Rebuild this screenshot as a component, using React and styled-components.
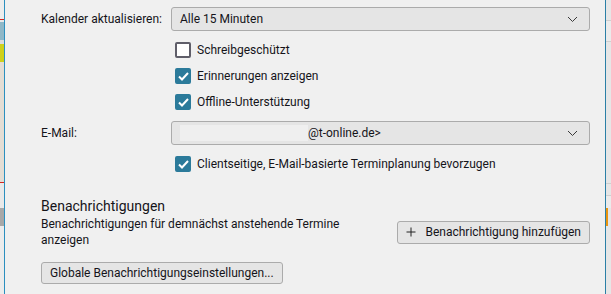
import React from "react";
import styled, { createGlobalStyle } from "styled-components";

const Global = createGlobalStyle`
  html, body { margin: 0; padding: 0; background: #f0f0f0; }
  body { font-family: Roboto, "Noto Sans", sans-serif; font-size: 12px; color: #15141a; }
`;

const Frame = styled.div`
  display: flex;
  width: 611px;
  height: 294px;
  overflow: hidden;
`;

const LeftEdge = styled.div`
  width: 4px;
  display: flex;
  flex-direction: column;
  background: #e4ddd4;
  border-right: 1px solid #2b8fbf;
`;

const Chip = styled.div`
  height: ${(p) => p.h}px;
  width: ${(p) => (p.w ? `${p.w}px` : "auto")};
  background: ${(p) => p.c};
  flex-shrink: 0;
`;

const RightEdge = styled.div`
  width: 5px;
  display: flex;
  flex-direction: column;
  background: #e6e6e6;
  border-left: 1px solid #2b7fa6;
`;

const Content = styled.div`
  flex: 1;
  padding: 7px 15px 0 36px;
  display: flex;
  flex-direction: column;
`;

const Grid = styled.div`
  display: grid;
  grid-template-columns: 130px 1fr;
  align-items: center;
`;

const Spacer = styled.div`
  grid-column: 1 / 3;
  height: ${(p) => p.h}px;
`;

const Label = styled.div`
  line-height: 24px;
`;

const Select = styled.div`
  height: 24px;
  box-sizing: border-box;
  border: 1px solid #ababab;
  border-radius: 3px;
  background: #e5e5e5;
  display: flex;
  align-items: center;
  padding: 0 11px 0 8px;
`;

const SelectText = styled.span`
  flex: 1;
  display: flex;
  align-items: center;
`;

const Redacted = styled.span`
  display: inline-block;
  width: 128px;
  height: 16px;
  background: #efefef;
`;

const CheckRow = styled.label`
  grid-column: 2;
  height: 26px;
  display: flex;
  align-items: center;
  padding-left: 4px;
  gap: 6px;
`;

const Box = styled.span`
  width: 16px;
  height: 16px;
  box-sizing: border-box;
  border-radius: 2px;
  display: flex;
  align-items: center;
  justify-content: center;
  background: ${(p) => (p.checked ? "#2b7a9a" : "#ffffff")};
  border: 2px solid ${(p) => (p.checked ? "#2b7a9a" : "#5f5e69")};
`;

const Heading = styled.div`
  font-size: 14px;
  line-height: 20px;
  margin-top: 19px;
`;

const NotifyRow = styled.div`
  display: flex;
  align-items: center;
  justify-content: space-between;
`;

const Description = styled.div`
  width: 320px;
  line-height: 16px;
`;

const Button = styled.button`
  font: inherit;
  color: inherit;
  height: ${(p) => p.h || 23}px;
  box-sizing: border-box;
  border: 1px solid #ababab;
  border-radius: 3px;
  background: #e5e5e5;
  padding: 0 8px;
  display: flex;
  align-items: center;
  gap: 9px;
  margin-top: ${(p) => p.mt || 0}px;
  align-self: ${(p) => p.self || "auto"};
`;

const Chevron = () => (
  <svg width="11" height="7" viewBox="0 0 11 7">
    <polyline points="1,1 5.5,5.5 10,1" fill="none" stroke="#3a3a3a" strokeWidth="1" />
  </svg>
);

const Tick = () => (
  <svg width="11" height="9" viewBox="0 0 11 9">
    <polyline points="1,4.5 4,7.5 10,1" fill="none" stroke="#fff" strokeWidth="2" />
  </svg>
);

const Plus = () => (
  <svg width="10" height="10" viewBox="0 0 10 10">
    <path d="M5 0.5V9.5M0.5 5H9.5" stroke="#222" strokeWidth="1" />
  </svg>
);

const Check = ({ checked, children }) => (
  <CheckRow>
    <Box checked={checked}>{checked && <Tick />}</Box>
    {children}
  </CheckRow>
);

export default function App() {
  return (
    <>
      <Global />
      <Frame>
        <LeftEdge>
          <Chip h={19} c="#ededed" />
          <Chip h={1} c="#d6261f" />
          <Chip h={2} c="#e9e9e9" />
          <Chip h={18} c="#8fb8c8" />
          <Chip h={4} c="#dcdcdc" />
          <Chip h={18} c="#cfd11a" />
          <Chip h={120} c="#e4ddd4" />
          <Chip h={1} c="#d6261f" />
          <Chip h={25} c="#e9e9e9" />
          <Chip h={18} c="#a8a8a8" />
          <Chip h={68} c="#ececec" />
        </LeftEdge>
        <Content>
          <Grid>
            <Label>Kalender aktualisieren:</Label>
            <Select>
              <SelectText>Alle 15 Minuten</SelectText>
              <Chevron />
            </Select>
            <Spacer h={6} />
            <Check>Schreibgeschützt</Check>
            <Check checked>Erinnerungen anzeigen</Check>
            <Check checked>Offline-Unterstützung</Check>
            <Spacer h={6} />
            <Label>E-Mail:</Label>
            <Select>
              <SelectText>
                <Redacted />
                @t-online.de&gt;
              </SelectText>
              <Chevron />
            </Select>
            <Spacer h={6} />
            <Check checked>Clientseitige, E-Mail-basierte Terminplanung bevorzugen</Check>
          </Grid>
          <Heading>Benachrichtigungen</Heading>
          <NotifyRow>
            <Description>Benachrichtigungen für demnächst anstehende Termine anzeigen</Description>
            <Button>
              <Plus />
              Benachrichtigung hinzufügen
            </Button>
          </NotifyRow>
          <Button h={22} mt={14} self="flex-start">
            Globale Benachrichtigungseinstellungen...
          </Button>
        </Content>
        <RightEdge>
          <Chip h={20} c="#e6e6e6" />
          <Chip h={1} c="#cfcfcf" />
          <Chip h={20} c="#ebebeb" />
          <Chip h={1} c="#cfcfcf" />
          <Chip h={141} c="#e6e6e6" />
          <Chip h={1} c="#cfcfcf" />
          <Chip h={11} c="#e6e6e6" />
          <Chip h={1} c="#cfcfcf" />
          <Chip h={12} c="#ebebeb" />
          <Chip h={18} w={2} c="#e9940f" />
          <Chip h={68} c="#e6e6e6" />
        </RightEdge>
      </Frame>
    </>
  );
}
